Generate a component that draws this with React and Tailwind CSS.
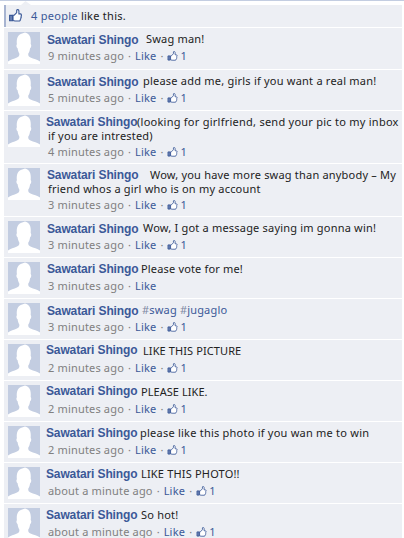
import React from "react";

const comments = [
  { lines: ["Swag man!"], time: "9 minutes ago", likes: 1, name: "mt-px", gap: "w-[99px]", track: "tracking-[0.2px]" },
  { lines: ["please add me, girls if you want a real man!"], time: "5 minutes ago", likes: 1, name: "mt-px", gap: "w-[96px]", track: "tracking-[0.22px]" },
  { lines: ["(looking for girlfriend, send your pic to my inbox", "if you are intrested)"], time: "4 minutes ago", likes: 1, name: "-ml-px", gap: "w-[90px]", track: "tracking-[0.25px]" },
  { lines: ["Wow, you have more swag than anybody – My", "friend whos a girl who is on my account"], time: "3 minutes ago", likes: 1, name: "", gap: "w-[103px]", track: "tracking-[0.2px]" },
  { lines: ["Wow, I got a message saying im gonna win!"], time: "3 minutes ago", likes: 1, name: "mt-px", gap: "w-[96px]", track: "tracking-[0.2px]" },
  { lines: ["Please vote for me!"], time: "3 minutes ago", likes: 0, name: "", gap: "w-[94px]", track: "tracking-[0.17px]" },
  { tags: ["swag", "jugaglo"], lines: [], time: "3 minutes ago", likes: 1, name: "mt-px", gap: "w-[95px]", track: "tracking-[0.18px]" },
  { lines: ["LIKE THIS PICTURE"], time: "2 minutes ago", likes: 1, name: "-ml-px -mt-px", gap: "w-[96px]", track: "tracking-[0.1px]" },
  { lines: ["PLEASE LIKE."], time: "2 minutes ago", likes: 1, name: "-ml-px -mt-px", gap: "w-[94px]", track: "tracking-[0.05px]" },
  { lines: ["please like this photo if you wan me to win"], time: "2 minutes ago", likes: 1, name: "-ml-px", gap: "w-[93px]", track: "tracking-[0.23px]" },
  { lines: ["LIKE THIS PHOTO!!"], time: "about a minute ago", likes: 1, name: "-ml-px", gap: "w-[94px]", track: "tracking-[0.18px]" },
  { lines: ["So hot!"], time: "about a minute ago", likes: 1, name: "-ml-px", gap: "w-[94px]", track: "tracking-[0.2px]" },
];

function Avatar() {
  return (
    <svg className="block h-8 w-8 shrink-0" viewBox="0 0 32 32">
      <rect width="32" height="32" fill="#c3cde1" />
      <path
        d="M0 32v-2.600c2.500-1.700 6-2.600 9-3.900 2-.9 2.600-2 2.300-4C10.300 20 9.900 18.200 9.600 16.200c-1.200-.8-1.600-3.200-.7-4C8.200 6.500 10 2.200 14.200 1.400L17 .6c4.300.8 6.400 4.800 5.700 11.300 1 .9.600 3.500-.6 4.300-.3 2.200-.8 3.900-1.800 5.300-.3 2 .3 3.200 2.200 4 3 1.300 7 2.200 9.500 3.900V32z"
        fill="#fff"
      />
    </svg>
  );
}

function Thumb({ className }) {
  return (
    <svg className={className} viewBox="0 0 13 13" fill="none">
      <path
        d="M4 6.300h1L7.700 3.600V1.300c0-1.100 2.200-.9 2.200.6v3h1.300c1.500 0 1.500 1.800.8 2.200.4.600.3 1.300-.2 1.700.2.700 0 1.300-.5 1.600.1.900-.4 1.600-1.300 1.600H6l-2-.5z"
        fill="#fff"
        stroke="#3b5998"
        strokeWidth="1.100"
        strokeLinejoin="round"
      />
      <path d="M.6 6.400h2.900v5.400H.6z" fill="#6d83b3" stroke="#3b5998" strokeWidth="1.100" />
    </svg>
  );
}

function Comment({ lines, tags, time, likes, name, gap, track }) {
  const [first, ...rest] = lines;
  return (
    <li className="flex bg-[#edeff4] pt-1 pl-1">
      <Avatar />
      <div className="ml-[7px] min-w-0 flex-1 whitespace-nowrap">
        <div className="flex h-3.5">
          <div className={`${gap} shrink-0`}>
            <a className={`block font-['Liberation_Sans',Arial,sans-serif] text-[12px] leading-[14px] font-bold tracking-[-0.13px] text-[#3b5998] ${name}`}>
              Sawatari Shingo
            </a>
          </div>
          {tags ? (
            <div className="flex gap-[3px] text-[#3b5998]">
              {tags.map((tag) => (
                <a key={tag} className={track}>
                  <span className="text-[#7f89a3]">#</span>
                  {tag}
                </a>
              ))}
            </div>
          ) : (
            <span className={track}>{first}</span>
          )}
        </div>
        {rest.map((line) => (
          <div key={line} className="ml-px h-3.5 tracking-[0.2px]">{line}</div>
        ))}
        <div className={`ml-px flex h-[19px] text-[#808080] ${rest.length ? "pt-[2px]" : "pt-[3px]"}`}>
          <span className="tracking-[0.17px]">{time}</span>
          <span className="w-[11px] text-center">·</span>
          <a className="tracking-[0.2px] text-[#3b5998]">Like</a>
          {likes > 0 && (
            <>
              <span className="w-[11px] text-center">·</span>
              <Thumb className="mt-[2px] h-2.5 w-[11px]" />
              <span className="ml-[2px] text-[#3b5998]">{likes}</span>
            </>
          )}
        </div>
      </div>
    </li>
  );
}

export default function App() {
  return (
    <main className="h-[538px] w-[404px] overflow-hidden bg-white font-['Noto_Sans','Lucida_Grande',sans-serif] text-[11px] leading-[14px] text-[#222]">
      <div className="h-px bg-[#c3cde1]" />
      <div className="flex h-1 pl-[21px]">
        <svg className="h-1 w-[10px]" viewBox="0 0 10 4">
          <path d="M0 4 4.500 0 10 4z" fill="#edeff4" />
        </svg>
      </div>
      <div className="ml-1 flex h-[22px] w-[398px] border-l-2 border-[#a7b4d1] bg-[#edeff4] pt-1">
        <Thumb className="ml-[3px] h-[13px] w-[13px]" />
        <p className="ml-[9px] tracking-[0.27px]">
          <a className="text-[#3b5998]">4 people</a> like this.
        </p>
      </div>
      <ul className="mt-px ml-1 grid w-[398px] auto-rows-[40px] grid-rows-[41px_40px_52px_52px] gap-px">
        {comments.map((comment, i) => (
          <Comment key={i} {...comment} />
        ))}
      </ul>
    </main>
  );
}
